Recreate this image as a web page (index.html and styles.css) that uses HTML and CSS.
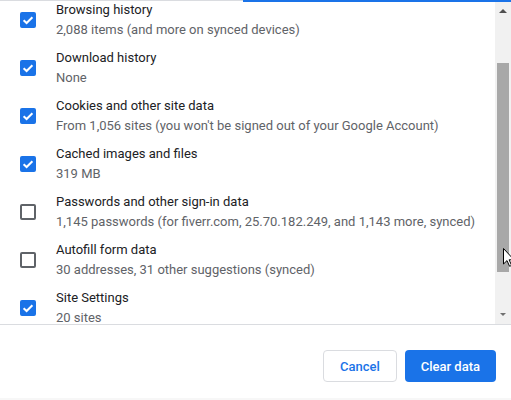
FILE: index.html
```html
<!DOCTYPE html>
<html>
<head>
<meta charset="utf-8">
<link rel="stylesheet" href="styles.css">
</head>
<body>
<div class="dialog">
  <div class="tabline"><div class="tab-gray"></div><div class="tab-blue"></div></div>
  <div class="main">
    <div class="list">
      <div class="rows">
        <div class="row"><span class="cb checked"><svg viewBox="0 0 16 16"><path d="M3.6 8.2 L6.6 11 L12.4 5.2" /></svg></span><div class="txt"><div class="title">Browsing history</div><div class="sub">2,088 items (and more on synced devices)</div></div></div>
        <div class="row"><span class="cb checked"><svg viewBox="0 0 16 16"><path d="M3.6 8.2 L6.6 11 L12.4 5.2" /></svg></span><div class="txt"><div class="title">Download history</div><div class="sub">None</div></div></div>
        <div class="row"><span class="cb checked"><svg viewBox="0 0 16 16"><path d="M3.6 8.2 L6.6 11 L12.4 5.2" /></svg></span><div class="txt"><div class="title">Cookies and other site data</div><div class="sub">From 1,056 sites (you won't be signed out of your Google Account)</div></div></div>
        <div class="row"><span class="cb checked"><svg viewBox="0 0 16 16"><path d="M3.6 8.2 L6.6 11 L12.4 5.2" /></svg></span><div class="txt"><div class="title">Cached images and files</div><div class="sub">319 MB</div></div></div>
        <div class="row"><span class="cb"></span><div class="txt"><div class="title">Passwords and other sign-in data</div><div class="sub">1,145 passwords (for fiverr.com, 25.70.182.249, and 1,143 more, synced)</div></div></div>
        <div class="row"><span class="cb"></span><div class="txt"><div class="title">Autofill form data</div><div class="sub">30 addresses, 31 other suggestions (synced)</div></div></div>
        <div class="row"><span class="cb checked"><svg viewBox="0 0 16 16"><path d="M3.6 8.2 L6.6 11 L12.4 5.2" /></svg></span><div class="txt"><div class="title">Site Settings</div><div class="sub">20 sites</div></div></div>
      </div>
    </div>
    <div class="scrollbar">
      <div class="sb-btn"><span class="arrow-up"></span></div>
      <div class="sb-track"><div class="thumb"></div></div>
      <div class="sb-btn"><span class="arrow-down"></span></div>
    </div>
  </div>
  <div class="divider"></div>
  <div class="footer">
    <button class="btn cancel">Cancel</button>
    <button class="btn primary">Clear data</button>
  </div>
  <div class="band"></div>
  <svg class="cursor" width="12" height="19" viewBox="0 0 12 19"><path d="M0.5 0.5 L0.5 16 L4 12.6 L6.6 18.3 L8.6 17.4 L6.1 11.8 L11 11.8 Z" fill="#fff" stroke="#000" stroke-width="1" stroke-linejoin="miter"/></svg>
</div>
</body>
</html>
```

FILE: styles.css
```css
html, body {
  margin: 0;
  padding: 0;
  background: #ffffff;
}
body {
  font-family: Roboto, "Liberation Sans", Arial, sans-serif;
  font-size: 13px;
  color: #202124;
}
.dialog {
  position: relative;
  width: 511px;
  height: 400px;
  display: flex;
  flex-direction: column;
  overflow: hidden;
}
.tabline {
  display: flex;
  height: 2px;
  flex: none;
}
.tab-gray {
  width: 243px;
  height: 1px;
  background: #dadce0;
}
.tab-blue {
  flex: 1;
  height: 2px;
  background: #1a73e8;
}
.main {
  display: flex;
  height: 322px;
  flex: none;
}
.list {
  flex: 1;
  overflow: hidden;
}
.rows {
  margin-top: -6px;
}
.row {
  display: flex;
  align-items: center;
  height: 48px;
  padding-left: 20px;
  box-sizing: border-box;
}
.cb {
  width: 16px;
  height: 16px;
  box-sizing: border-box;
  border: 2px solid #5f6368;
  border-radius: 2px;
  flex: none;
  margin-right: 20px;
  display: flex;
}
.cb.checked {
  background: #1a73e8;
  border-color: #1a73e8;
}
.cb svg {
  width: 16px;
  height: 16px;
  margin: -2px;
}
.cb svg path {
  fill: none;
  stroke: #ffffff;
  stroke-width: 2;
}
.txt {
  line-height: 20px;
  white-space: nowrap;
}
.title {
  color: #202124;
}
.sub {
  color: #5f6368;
}
.scrollbar {
  width: 16px;
  flex: none;
  background: #f1f1f1;
  display: flex;
  flex-direction: column;
}
.sb-btn {
  height: 17px;
  display: flex;
  align-items: center;
  justify-content: center;
  flex: none;
}
.arrow-up {
  width: 0;
  height: 0;
  border-left: 4px solid transparent;
  border-right: 4px solid transparent;
  border-bottom: 4px solid #505050;
  margin-left: -1px;
}
.arrow-down {
  width: 0;
  height: 0;
  border-left: 3px solid transparent;
  border-right: 3px solid transparent;
  border-top: 3px solid #707070;
  margin-left: -1px;
  margin-top: -2px;
}
.sb-track {
  flex: 1;
  padding: 44px 2px 0 2px;
}
.thumb {
  height: 209px;
  background: #a8a8a8;
}
.divider {
  height: 1px;
  background: #dadce0;
  flex: none;
}
.footer {
  height: 73px;
  box-sizing: border-box;
  padding: 25px 15px 0 0;
  display: flex;
  justify-content: flex-end;
  align-items: flex-start;
  gap: 8px;
  flex: none;
}
.btn {
  height: 32px;
  font-family: Roboto, "Liberation Sans", Arial, sans-serif;
  font-size: 13px;
  font-weight: 500;
  border-radius: 4px;
  padding: 0 16px;
  box-sizing: border-box;
  white-space: nowrap;
  cursor: pointer;
}
.cancel {
  background: #ffffff;
  color: #1a73e8;
  border: 1px solid #dadce0;
}
.primary {
  background: #1a73e8;
  color: #ffffff;
  border: none;
}
.band {
  flex: 1;
  background: #f7f7f7;
}
.cursor {
  position: absolute;
  left: 503px;
  top: 248px;
}
```
